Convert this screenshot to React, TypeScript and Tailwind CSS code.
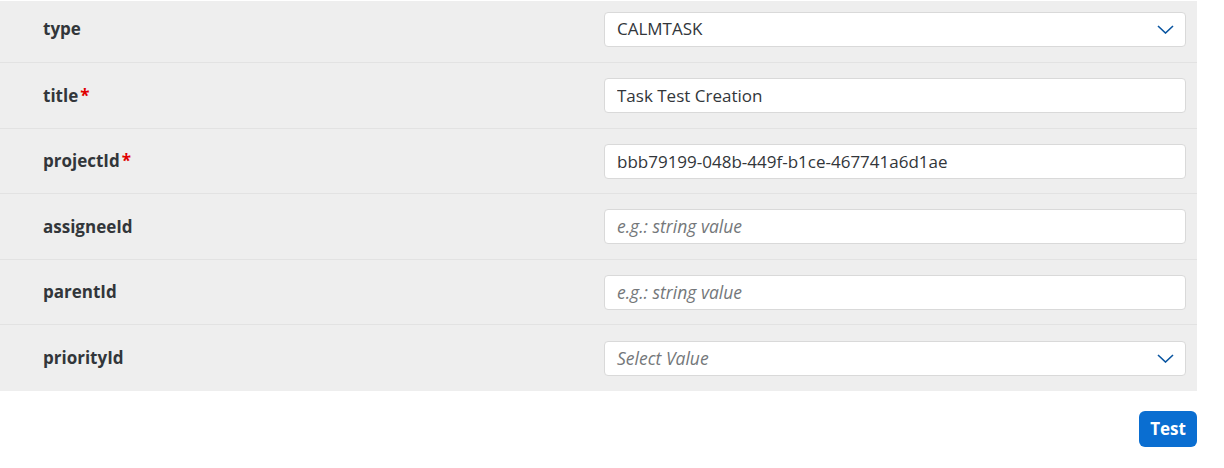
import { useState } from "react";

type Field = {
  name: string;
  required?: boolean;
  kind: "select" | "input";
  value?: string;
  placeholder?: string;
  h: string;
};

const fields: Field[] = [
  { name: "type", kind: "select", value: "CALMTASK", h: "h-[62px] pb-[5px]" },
  { name: "title", required: true, kind: "input", value: "Task Test Creation", h: "h-[66px]" },
  { name: "projectId", required: true, kind: "input", value: "bbb79199-048b-449f-b1ce-467741a6d1ae", h: "h-[65px]" },
  { name: "assigneeId", kind: "input", placeholder: "e.g.: string value", h: "h-[66px]" },
  { name: "parentId", kind: "input", placeholder: "e.g.: string value", h: "h-[65px]" },
  { name: "priorityId", kind: "select", placeholder: "Select Value", h: "h-[66px]" },
];

function Chevron() {
  return (
    <svg width="17" height="9" viewBox="0 0 17 9" className="shrink-0">
      <polyline points="1,1 8.5,8 16,1" fill="none" stroke="#0854a0" strokeWidth="1.6" />
    </svg>
  );
}

function FieldControl({ f }: { f: Field }) {
  const [val, setVal] = useState(f.value ?? "");
  if (f.kind === "select") {
    return (
      <div className="w-[582px] h-[35px] flex items-center justify-between bg-white border border-[#d9d9d9] rounded-[4px] pl-[12px] pr-[11px]">
        {f.value ? (
          <span className="text-[17px] text-[#32363a]">{f.value}</span>
        ) : (
          <span className="text-[17.5px] italic text-[#74777a]">{f.placeholder}</span>
        )}
        <Chevron />
      </div>
    );
  }
  return (
    <input
      value={val}
      onChange={(e) => setVal(e.target.value)}
      placeholder={f.placeholder}
      className="w-[582px] h-[35px] bg-white border border-[#d9d9d9] rounded-[4px] px-[12px] text-[17px] text-[#32363a] outline-none placeholder:italic placeholder:text-[17.5px] placeholder:text-[#74777a]"
    />
  );
}

export default function App() {
  return (
    <div className="w-[1224px] h-[468px] bg-white pt-[1px] font-['Open_Sans',sans-serif]">
      <div className="w-[1197px] bg-[#eeeeee]">
        {fields.map((f, i) => (
          <div
            key={f.name}
            className={`flex items-center pl-[43px] pr-[11px] ${f.h} ${
              i < fields.length - 1 ? "border-b border-[#e2e2e2]" : ""
            }`}
          >
            <div className="flex-1 text-[17px] font-bold text-[#32363a]">
              {f.name}
              {f.required && <span className="text-[#e00000] ml-[2px]">*</span>}
            </div>
            <FieldControl f={f} />
          </div>
        ))}
      </div>
      <div className="w-[1197px] flex justify-end mt-[20px]">
        <button className="w-[58px] h-[36px] rounded-[6px] bg-[#0a6ed1] text-white text-[17px] font-bold">
          Test
        </button>
      </div>
    </div>
  );
}
